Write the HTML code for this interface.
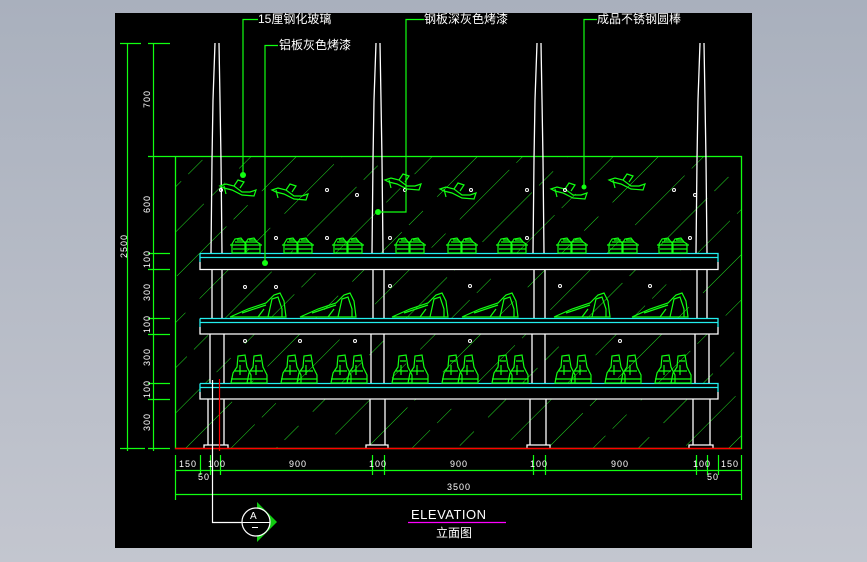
<!DOCTYPE html>
<html><head><meta charset="utf-8"><style>
html,body{margin:0;padding:0;width:867px;height:562px;overflow:hidden;background:linear-gradient(#a9b0bd,#c3c6cf);}
svg{position:absolute;left:0;top:0}
text{font-family:"Liberation Sans","Noto Sans CJK SC",sans-serif;fill:#fff}
</style></head><body>
<svg width="867" height="562" viewBox="0 0 867 562">
<defs>
<pattern id="h" width="32" height="120" patternUnits="userSpaceOnUse" patternTransform="rotate(45)">
<line x1="0" y1="0" x2="0" y2="120" stroke="#22e022" stroke-width="1" stroke-dasharray="70 20 20 10"/>
</pattern>
<clipPath id="c"><rect x="175" y="156" width="566" height="292"/></clipPath>
<g id="snk" fill="none" stroke="#1f1" stroke-width="1.2">
<path d="M2 17 L2 8 L5 3 L11 2 L14 6 L16 8 L16 17 Z"/>
<path d="M15 17 L15 8 L18 3 L24 2 L27 6 L30 8 L30 17 Z"/>
<path d="M0 9 H32 M3 13 H30 M7 4 H12 M19 4 H25 M5 6 H27"/>
</g>
<g id="heel" fill="none" stroke="#1f1" stroke-width="1.2">
<path d="M2 28 L20 20 L38 14 L46 6 L52 4 L56 12 L58 28 Z"/>
<path d="M40 28 L44 10 L50 8 L54 20 L54 28"/>
<path d="M14 24 L38 16 M30 28 L36 20"/>
</g>
<g id="boot" fill="none" stroke="#1f1" stroke-width="1.2">
<path d="M2 30 L4 20 L8 14 L9 3 L16 2 L18 14 L22 22 L22 30 Z"/>
<path d="M18 30 L20 20 L24 14 L25 3 L32 2 L34 14 L38 22 L38 30 Z"/>
<path d="M2 26 H22 M18 26 H38 M10 8 H16 M26 8 H32 M11 12 V22 M27 12 V22 M6 18 H18 M22 18 H34"/>
</g>
<g id="sand" fill="none" stroke="#1f1" stroke-width="1.2">
<path d="M0 6 L6 4 L14 6 L22 12 L30 12 L36 10 L34 16 L22 15 L12 10 L4 8 Z"/>
<path d="M4 6 L6 14 M14 6 L18 0 L24 2 L20 8"/>
</g>
</defs>
<rect x="115" y="13" width="637" height="535" fill="#000"/>
<rect x="175" y="156" width="566" height="292" fill="url(#h)" clip-path="url(#c)"/>
<rect x="175.5" y="156.5" width="566" height="292" fill="none" stroke="#1f1" stroke-width="1.3"/>
<g>
<rect x="200" y="253" width="518" height="17" fill="#000"/>
<rect x="200" y="318" width="518" height="16" fill="#000"/>
<rect x="200" y="383" width="518" height="16" fill="#000"/>
</g>
<g stroke="#2ee" stroke-width="1.3" fill="none">
<path d="M200 253.5 H718 V262 M200 253.5 V262 M200 257.5 H718"/>
<path d="M200 318.5 H718 V327 M200 318.5 V327 M200 322.5 H718"/>
<path d="M200 383.5 H718 V392 M200 383.5 V392 M200 387.5 H718"/>
</g>
<g stroke="#fff" stroke-width="1.3" fill="none">
<path d="M200 262 V269.5 H718 V262"/>
<path d="M200 327 V334 H718 V327"/>
<path d="M200 392 V399 H718 V392"/>
</g>
<g stroke="#fff" stroke-width="1.3" fill="#000">
<path d="M215 43 L213 100 L212 160 L211 253 M219 43 L220 100 L221 160 L222 253"/>
<path d="M376 43 L374 100 L373 160 L372 253 M380 43 L381 100 L382 160 L383 253"/>
<path d="M537 43 L535 100 L534 160 L533 253 M541 43 L542 100 L543 160 L544 253"/>
<path d="M700 43 L698 100 L697 160 L696 253 M704 43 L705 100 L706 160 L707 253"/>
<path d="M212 270 V318 M222 270 V318 M373 270 V318 M384 270 V318 M534 270 V318 M545 270 V318 M697 270 V318 M707 270 V318"/>
<path d="M210 334 V383 M224 334 V383 M371 334 V383 M384 334 V383 M532 334 V383 M545 334 V383 M695 334 V383 M709 334 V383"/>
<path d="M208 399 V445 M224 399 V445 M370 399 V445 M385 399 V445 M530 399 V445 M546 399 V445 M693 399 V445 M710 399 V445"/>
<path d="M204 448 V445 H228 V448 M366 448 V445 H388 V448 M527 448 V445 H550 V448 M689 448 V445 H713 V448"/>
</g>
<line x1="175" y1="448.5" x2="741" y2="448.5" stroke="#f00" stroke-width="1.5"/>
<line x1="219.5" y1="379" x2="219.5" y2="451" stroke="#f00" stroke-width="1.2"/>
<g>
<use href="#sand" x="220" y="180"/><use href="#sand" x="272" y="184"/>
<use href="#sand" x="385" y="174"/><use href="#sand" x="440" y="183"/>
<use href="#sand" x="551" y="183"/><use href="#sand" x="609" y="174"/>
<use href="#snk" x="230" y="236"/><use href="#snk" x="282" y="236"/><use href="#snk" x="332" y="236"/>
<use href="#snk" x="394" y="236"/><use href="#snk" x="446" y="236"/><use href="#snk" x="496" y="236"/>
<use href="#snk" x="556" y="236"/><use href="#snk" x="607" y="236"/><use href="#snk" x="657" y="236"/>
<use href="#heel" x="228" y="289"/><use href="#heel" x="298" y="289"/>
<use href="#heel" x="390" y="289"/><use href="#heel" x="460" y="289"/>
<use href="#heel" x="552" y="289"/><use href="#heel" x="630" y="289"/>
<use href="#boot" x="229" y="353"/><use href="#boot" x="279" y="353"/><use href="#boot" x="329" y="353"/>
<use href="#boot" x="390" y="353"/><use href="#boot" x="440" y="353"/><use href="#boot" x="490" y="353"/>
<use href="#boot" x="553" y="353"/><use href="#boot" x="603" y="353"/><use href="#boot" x="653" y="353"/>
</g>
<g fill="none" stroke="#fff" stroke-width="1">
<circle cx="221" cy="190" r="1.5"/><circle cx="327" cy="190" r="1.5"/><circle cx="357" cy="195" r="1.5"/>
<circle cx="405" cy="190" r="1.5"/><circle cx="471" cy="190" r="1.5"/><circle cx="527" cy="190" r="1.5"/>
<circle cx="565" cy="190" r="1.5"/><circle cx="674" cy="190" r="1.5"/><circle cx="695" cy="195" r="1.5"/>
<circle cx="276" cy="238" r="1.5"/><circle cx="327" cy="238" r="1.5"/><circle cx="390" cy="238" r="1.5"/><circle cx="527" cy="238" r="1.5"/><circle cx="690" cy="238" r="1.5"/>
<circle cx="245" cy="287" r="1.5"/><circle cx="276" cy="287" r="1.5"/><circle cx="390" cy="286" r="1.5"/><circle cx="470" cy="286" r="1.5"/><circle cx="560" cy="286" r="1.5"/><circle cx="650" cy="286" r="1.5"/>
<circle cx="245" cy="341" r="1.5"/><circle cx="300" cy="341" r="1.5"/><circle cx="355" cy="341" r="1.5"/><circle cx="470" cy="341" r="1.5"/><circle cx="620" cy="341" r="1.5"/>
</g>
<g stroke="#1f1" stroke-width="1.2" fill="none">
<path d="M258 19.5 H243 V175"/><path d="M278 45.5 H265 V263"/>
<path d="M424 19.5 H406 V212 H380"/><path d="M597 19.5 H584 V186"/>
</g>
<g fill="#1f1"><circle cx="243" cy="175" r="3"/><circle cx="265" cy="263" r="3"/><circle cx="378" cy="212" r="3"/><circle cx="584" cy="187" r="2.5"/></g>
<text x="258" y="23" font-size="12">15厘钢化玻璃</text>
<text x="279" y="49" font-size="12">铝板灰色烤漆</text>
<text x="424" y="23" font-size="12">钢板深灰色烤漆</text>
<text x="597" y="23" font-size="12">成品不锈钢圆棒</text>
<g stroke="#1f1" stroke-width="1.2" fill="none">
<path d="M127.5 43 V451 M153.5 43 V451"/>
<path d="M120 43.5 H141 M148 43.5 H170 M148 156.5 H175 M148 253.5 H170 M148 269.5 H170 M148 318.5 H170 M148 334.5 H170 M148 383.5 H170 M148 399.5 H170 M120 448.5 H145 M148 448.5 H170"/>
<path d="M175.5 455 V500 M741.5 455 V500 M175 470.5 H741 M175 494.5 H741 M210.5 455 V475 M220.5 455 V475 M372.5 455 V475 M384.5 455 V475 M533.5 455 V475 M545.5 455 V475 M696.5 455 V475 M707.5 455 V475 M200.5 455 V475 M718.5 455 V475"/>
</g>
<g font-size="9" letter-spacing="1">
<text transform="translate(150,108) rotate(-90)">700</text>
<text transform="translate(150,213) rotate(-90)">600</text>
<text transform="translate(150,268) rotate(-90)">100</text>
<text transform="translate(150,301) rotate(-90)">300</text>
<text transform="translate(150,333) rotate(-90)">100</text>
<text transform="translate(150,366) rotate(-90)">300</text>
<text transform="translate(150,398) rotate(-90)">100</text>
<text transform="translate(150,431) rotate(-90)">300</text>
<text transform="translate(127,258) rotate(-90)">2500</text>
<text x="179" y="467">150</text><text x="208" y="467">100</text><text x="289" y="467">900</text>
<text x="369" y="467">100</text><text x="450" y="467">900</text><text x="530" y="467">100</text>
<text x="611" y="467">900</text><text x="693" y="467">100</text><text x="721" y="467">150</text>
<text x="198" y="480">50</text><text x="707" y="480">50</text>
<text x="447" y="490">3500</text>
</g>
<path d="M212.5 380 V522.5 H243" stroke="#fff" stroke-width="1.2" fill="none"/>
<path d="M257 502 L277 522 L257 542 Z" fill="#1c1"/>
<circle cx="256" cy="522" r="14" fill="#000" stroke="#fff" stroke-width="1.2"/>
<line x1="242" y1="522.5" x2="270" y2="522.5" stroke="#fff"/>
<line x1="252" y1="527.5" x2="258" y2="527.5" stroke="#fff"/>
<text x="250" y="519" font-size="10">A</text>
<text x="411" y="519" font-size="13" letter-spacing="0.5">ELEVATION</text>
<line x1="408" y1="522.5" x2="506" y2="522.5" stroke="#f0f" stroke-width="1.2"/>
<text x="436" y="537" font-size="12">立面图</text>
</svg>
</body></html>
